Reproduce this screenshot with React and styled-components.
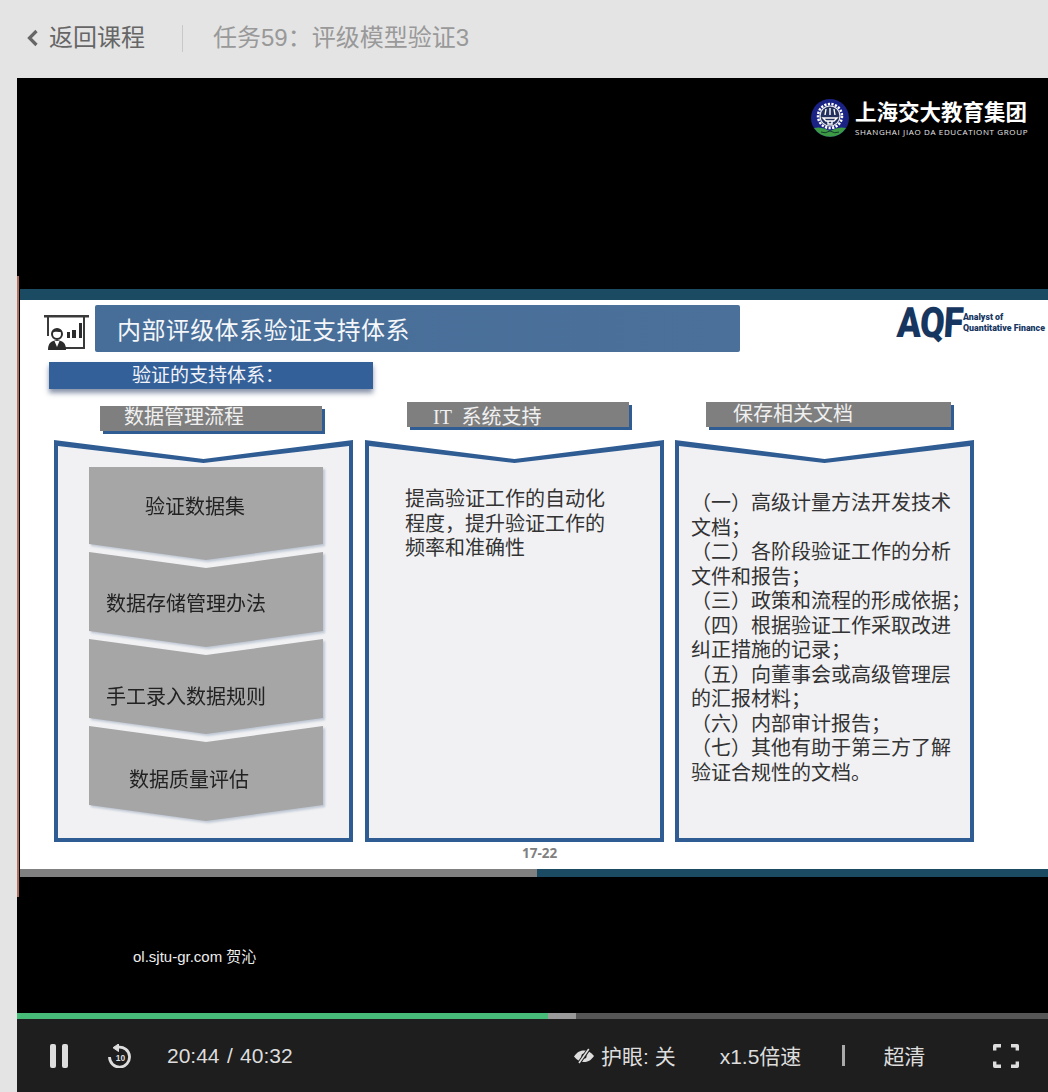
import React from 'react';
import styled, { createGlobalStyle } from 'styled-components';

const UI_FONT = '"Liberation Sans", "Noto Sans CJK SC", sans-serif';
const SLIDE_FONT = '"Liberation Serif", "Noto Sans CJK SC", serif';
const BLUE = '#2f5c93';

const GlobalStyle = createGlobalStyle`
  html, body { margin: 0; padding: 0; background: #e4e4e4; }
  body { font-family: ${UI_FONT}; }
  * { box-sizing: border-box; }
`;

const Page = styled.div`
  width: 1048px;
  height: 1092px;
  overflow: hidden;
  display: flex;
  flex-direction: column;
`;

const Header = styled.header`
  height: 78px;
  padding: 0 0 2px 26px;
  display: flex;
  align-items: center;
  background: #e4e4e4;
`;

const BackLink = styled.a`
  display: flex;
  align-items: center;
  gap: 10px;
  color: #666;
  font-size: 24px;
  line-height: 28px;
  width: 156px;
`;

const Divider = styled.div`
  width: 1px;
  height: 27px;
  background: #c8c8c8;
  margin-right: 30px;
`;

const TaskTitle = styled.div`
  color: #999;
  font-size: 24px;
  line-height: 28px;
`;

const Player = styled.div`
  flex: 1;
  margin-left: 17px;
  display: flex;
  flex-direction: column;
`;

const Video = styled.div`
  position: relative;
  flex: 1;
  background: #000;
  padding-top: 198px;
`;

const Brand = styled.div`
  position: absolute;
  top: 21px;
  right: 20px;
  display: flex;
  align-items: center;
  gap: 6px;
  color: #fff;
`;

const BrandText = styled.div`
  display: flex;
  flex-direction: column;
  width: 173px;
`;

const BrandName = styled.div`
  font-family: ${SLIDE_FONT};
  font-size: 21.5px;
  line-height: 26px;
  font-weight: 700;
  white-space: nowrap;
`;

const BrandSub = styled.div`
  font-family: "Open Sans", sans-serif;
  font-size: 8px;
  line-height: 10px;
  letter-spacing: 0.63px;
  color: #e8e8e8;
  white-space: nowrap;
  margin-top: 1px;
`;

const Watermark = styled.div`
  position: absolute;
  left: 116px;
  top: 870px;
  color: #eee;
  font-size: 15px;
  line-height: 18px;
`;

const SlideFrame = styled.div`
  height: 621px;
  padding-top: 13px;
  border-left: 2px solid #b0705f;
  display: flex;
  flex-direction: column;
  font-family: ${SLIDE_FONT};
`;

const TopBand = styled.div`
  height: 11px;
  margin-left: 1px;
  background: #1b4a63;
`;

const SlideBody = styled.div`
  position: relative;
  height: 569px;
  margin-left: 1px;
  padding: 5px 0 0 24px;
  background: #fff;
`;

const TitleRow = styled.div`
  display: flex;
  align-items: flex-end;
  height: 47px;
`;

const TitleBar = styled.div`
  width: 645px;
  height: 47px;
  margin-left: 6px;
  padding-left: 22px;
  display: flex;
  align-items: center;
  border-radius: 2px;
  background: linear-gradient(90deg, #476e98, #4b719b);
  color: #f4f6f9;
  font-size: 24px;
  letter-spacing: 0.4px;
`;

const AqfLogo = styled.div`
  position: absolute;
  top: 6px;
  right: 4px;
  display: flex;
  align-items: center;
  color: #16365f;
`;

const AqfMark = styled.div`
  font-family: Roboto, sans-serif;
  font-weight: 900;
  font-size: 42px;
  line-height: 34px;
  letter-spacing: -1px;
  width: 66px;
  transform-origin: left center;
  transform: scaleX(0.85) skewX(-4deg);
`;

const AqfCaption = styled.div`
  font-family: Roboto, sans-serif;
  font-weight: 900;
  font-size: 8.8px;
  line-height: 11px;
  white-space: nowrap;
  width: 81px;
`;

const SubHead = styled.div`
  position: relative;
  width: 324px;
  height: 27px;
  margin: 10px 0 0 5px;
  padding-left: 83px;
  display: flex;
  align-items: center;
  background: #34609a;
  box-shadow: 0 4px 5px rgba(40, 60, 100, 0.55);
  color: #f2f4f8;
  font-size: 19px;
  line-height: 24px;
`;

const Columns = styled.div`
  display: flex;
  margin-left: 10px;
`;

const Column = styled.div`
  width: 299px;
  margin-right: ${(p) => p.$gap}px;
`;

const HeadSlot = styled.div`
  height: 51px;
  padding-top: ${(p) => p.$top}px;
  padding-left: ${(p) => p.$left}px;
`;

const ColumnHead = styled.div`
  width: ${(p) => p.$width}px;
  height: 25px;
  padding-left: ${(p) => p.$textLeft}px;
  padding-top: ${(p) => p.$textTop}px;
  background: #7f7f7f;
  box-shadow: 3px 3px 0 ${BLUE};
  color: #f0f0f0;
  font-size: 20px;
  line-height: 22px;
  white-space: pre;
`;

const Panel = styled.div`
  height: 402px;
  padding: 4px;
  background: ${BLUE};
  clip-path: polygon(0 0, 50% 19px, 100% 0, 100% 100%, 0 100%);
`;

const PanelInner = styled.div`
  height: 100%;
  padding: ${(p) => p.$top}px 0 0 ${(p) => p.$left}px;
  background: #f1f1f3;
  clip-path: polygon(0 2px, 50% 19px, 100% 2px, 100% 100%, 0 100%);
  color: #333;
  font-size: 20px;
  line-height: 24.5px;
`;

const Line = styled.div`
  white-space: nowrap;
`;

const ChevronStack = styled.div`
  width: 236px;
  filter: drop-shadow(2px 2px 1px rgba(170, 182, 200, 0.7));
`;

const Chevron = styled.div`
  width: 234px;
  height: ${(p) => (p.$first ? 93 : 95)}px;
  margin-top: ${(p) => (p.$first ? 0 : -8)}px;
  padding-top: ${(p) => p.$textTop}px;
  padding-left: ${(p) => p.$textLeft}px;
  background: #a6a6a6;
  color: #222;
  font-size: 20px;
  line-height: 24px;
  clip-path: ${(p) =>
    p.$first
      ? 'polygon(0 0, 100% 0, 100% 77px, 50% 93px, 0 77px)'
      : 'polygon(0 0, 50% 16px, 100% 0, 100% 79px, 50% 95px, 0 79px)'};
`;

const PageNumber = styled.div`
  position: absolute;
  left: 502px;
  top: 545px;
  color: #808080;
  font-family: "Open Sans", sans-serif;
  font-size: 13.5px;
  font-weight: 700;
  line-height: 17px;
`;

const BottomBand = styled.div`
  height: 8px;
  margin-left: 1px;
  background: linear-gradient(90deg, #808080 0 517px, #1b4a63 517px);
`;

const Progress = styled.div`
  height: 6px;
  display: flex;
  background: #565656;
`;

const ProgressPart = styled.div`
  height: 100%;
  background: ${(p) => p.$color};
`;

const Controls = styled.div`
  height: 73px;
  padding-left: 33px;
  display: flex;
  align-items: center;
  background: #1e1e1e;
  color: #ddd;
  font-size: 21px;
`;

const ControlIcon = styled.svg`
  display: block;
  flex: none;
  margin-left: ${(p) => p.$left || 0}px;
`;

const TimeText = styled.div`
  margin-left: 35px;
  width: 127px;
  word-spacing: 1.5px;
  white-space: pre;
`;

const ControlText = styled.div`
  margin: 0 0 2px ${(p) => p.$left}px;
  white-space: nowrap;
`;

const ControlDivider = styled.div`
  width: 3px;
  height: 21px;
  margin-left: 41px;
  background: #aaa;
`;

const PresenterIcon = () => (
  <svg width="45" height="36" viewBox="0 0 45 36" style={{ flex: 'none', marginBottom: 1 }}>
    <path d="M0 0h45v2.500H0zM3 2h2v19H3zM39 2h2v32H17v-2h22z" fill="#3a3a3a" />
    <path d="M23 17h3v6h-3zM28 15h4v8h-4zM35 8h3v15h-3z" fill="#2c2c2c" />
    <circle cx="13" cy="19" r="5" fill="#fff" stroke="#2c2c2c" strokeWidth="2" />
    <path d="M8 18c1-5 9-6 10-1-4 0-7-1-10 1z" fill="#2c2c2c" />
    <path d="M4 35c0-7 3-9 9-10 6 1 9 3 9 10z" fill="#2c2c2c" />
    <path d="M10.500 26h5l-2.500 6z" fill="#fff" />
  </svg>
);

const SchoolLogo = () => (
  <svg width="38" height="38" viewBox="0 0 38 38">
    <circle cx="19" cy="19" r="19" fill="#1a2384" />
    <path d="M3 29a19 19 0 0 0 32 0q-8-2-16 3q-8-5-16-3z" fill="#3c9a45" />
    <path d="M19 32q-5 3-9 1M19 32q5 3 9 1" fill="none" stroke="#123a2c" strokeWidth="1" />
    <circle cx="19" cy="17" r="12" fill="none" stroke="#fff" strokeWidth="2.500" strokeDasharray="2.200 1.400" />
    <circle cx="19" cy="17" r="10" fill="#24305e" stroke="#e8e8e8" strokeWidth="1.200" />
    <path d="M12 19h14l-3 3h-8zM17 22h4v3h-4zM15 10l-1 6M19 9v7M23 10l1 6" fill="none" stroke="#fff" strokeWidth="1.400" />
  </svg>
);

const App = () => {
  return (
    <Page>
      <GlobalStyle />
      <Header>
        <BackLink>
          <svg width="13" height="18" viewBox="0 0 13 18">
            <path d="M10.500 2 3.500 9l7 7" fill="none" stroke="#666" strokeWidth="3.200" />
          </svg>
          <span>返回课程</span>
        </BackLink>
        <Divider />
        <TaskTitle>任务59：评级模型验证3</TaskTitle>
      </Header>

      <Player>
        <Video>
          <Brand>
            <SchoolLogo />
            <BrandText>
              <BrandName>上海交大教育集团</BrandName>
              <BrandSub>SHANGHAI JIAO DA EDUCATIONT GROUP</BrandSub>
            </BrandText>
          </Brand>

          <SlideFrame>
            <TopBand />
            <SlideBody>
              <TitleRow>
                <PresenterIcon />
                <TitleBar>内部评级体系验证支持体系</TitleBar>
              </TitleRow>
              <AqfLogo>
                <AqfMark>AQF</AqfMark>
                <AqfCaption>
                  Analyst of
                  <br />
                  Quantitative Finance
                </AqfCaption>
              </AqfLogo>
              <SubHead>验证的支持体系：</SubHead>

              <Columns>
                <Column $gap={12}>
                  <HeadSlot $top={17} $left={46}>
                    <ColumnHead $width={222} $textLeft={24} $textTop={0}>数据管理流程</ColumnHead>
                  </HeadSlot>
                  <Panel>
                    <PanelInner $top={23} $left={31}>
                      <ChevronStack>
                        <Chevron $first $textTop={28} $textLeft={56}>验证数据集</Chevron>
                        <Chevron $textTop={40} $textLeft={17}>数据存储管理办法</Chevron>
                        <Chevron $textTop={46} $textLeft={17}>手工录入数据规则</Chevron>
                        <Chevron $textTop={42} $textLeft={40}>数据质量评估</Chevron>
                      </ChevronStack>
                    </PanelInner>
                  </Panel>
                </Column>

                <Column $gap={11}>
                  <HeadSlot $top={13} $left={42}>
                    <ColumnHead $width={222} $textLeft={26} $textTop={4}>{'IT  系统支持'}</ColumnHead>
                  </HeadSlot>
                  <Panel>
                    <PanelInner $top={43} $left={36}>
                      <Line>提高验证工作的自动化</Line>
                      <Line>程度，提升验证工作的</Line>
                      <Line>频率和准确性</Line>
                    </PanelInner>
                  </Panel>
                </Column>

                <Column $gap={0}>
                  <HeadSlot $top={13} $left={31}>
                    <ColumnHead $width={245} $textLeft={27} $textTop={1}>保存相关文档</ColumnHead>
                  </HeadSlot>
                  <Panel>
                    <PanelInner $top={47} $left={12}>
                      <Line>（一）高级计量方法开发技术</Line>
                      <Line>文档；</Line>
                      <Line>（二）各阶段验证工作的分析</Line>
                      <Line>文件和报告；</Line>
                      <Line>（三）政策和流程的形成依据；</Line>
                      <Line>（四）根据验证工作采取改进</Line>
                      <Line>纠正措施的记录；</Line>
                      <Line>（五）向董事会或高级管理层</Line>
                      <Line>的汇报材料；</Line>
                      <Line>（六）内部审计报告；</Line>
                      <Line>（七）其他有助于第三方了解</Line>
                      <Line>验证合规性的文档。</Line>
                    </PanelInner>
                  </Panel>
                </Column>
              </Columns>
              <PageNumber>17-22</PageNumber>
            </SlideBody>
            <BottomBand />
          </SlideFrame>

          <Watermark>ol.sjtu-gr.com 贺沁</Watermark>
        </Video>

        <Progress>
          <ProgressPart $color="#47bb78" style={{ width: 531 }} />
          <ProgressPart $color="#9a9a9a" style={{ width: 28 }} />
        </Progress>

        <Controls>
          <ControlIcon width="18" height="24" viewBox="0 0 18 24">
            <rect x="0" y="0" width="6" height="24" rx="2" fill="#ddd" />
            <rect x="12" y="0" width="6" height="24" rx="2" fill="#ddd" />
          </ControlIcon>
          <ControlIcon $left={40} width="24" height="24" viewBox="0 0 24 24">
            <path d="M10 3.200A10 10 0 1 1 1.500 13" fill="none" stroke="#ddd" strokeWidth="2.800" />
            <path d="M10.500 0 5 3.700l5.500 3.800z" fill="#ddd" stroke="#ddd" strokeLinejoin="round" />
            <text x="12.500" y="17" textAnchor="middle" fontFamily="Liberation Sans" fontWeight="700" fontSize="8.500" fill="#ddd">10</text>
          </ControlIcon>
          <TimeText>20:44 / 40:32</TimeText>
          <ControlIcon $left={280} width="20" height="16" viewBox="0 0 20 16">
            <path d="M0 8.500C3 4 6.500 2.500 10 2.500s7 1.500 10 5.500c-3 4.500-6.500 6-10 6S3 12.500 0 8.500z" fill="#ddd" />
            <circle cx="10" cy="8" r="2.600" fill="#1e1e1e" />
            <path d="M15 1 5 15" stroke="#1e1e1e" strokeWidth="3.600" />
            <path d="M14.800 1 5 15" stroke="#ddd" strokeWidth="1.600" />
          </ControlIcon>
          <ControlText $left={7}>护眼: 关</ControlText>
          <ControlText $left={44}>x1.5倍速</ControlText>
          <ControlDivider />
          <ControlText $left={38}>超清</ControlText>
          <ControlIcon $left={68} width="26" height="24" viewBox="0 0 26 24">
            <path d="M1.700 6.500V1.700H8M18 1.700h6.300V6.500M24.300 17.500v4.800H18M8 22.300H1.700v-4.800" fill="none" stroke="#ddd" strokeWidth="3.400" strokeLinejoin="round" />
          </ControlIcon>
        </Controls>
      </Player>
    </Page>
  );
};

export default App;
